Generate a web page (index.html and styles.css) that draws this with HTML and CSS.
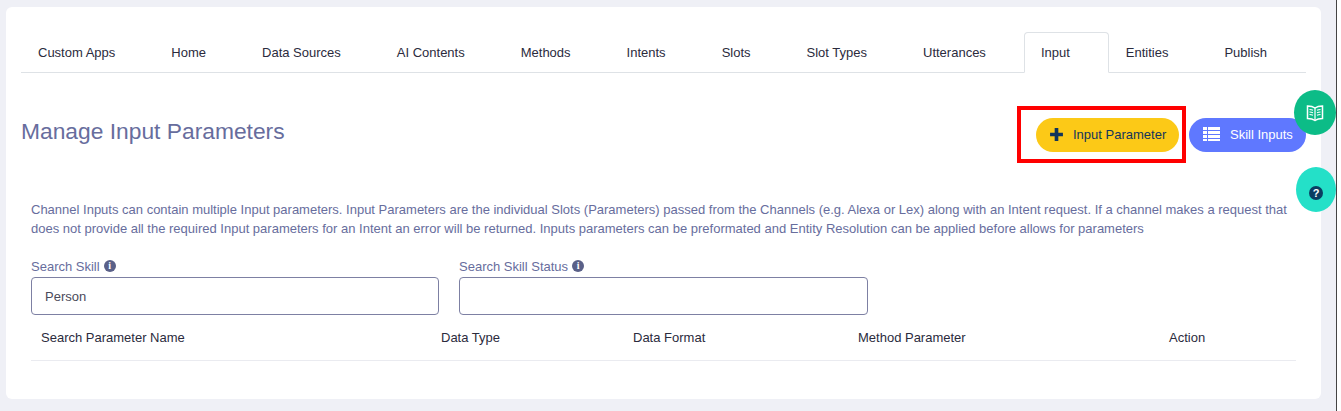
FILE: index.html
```html
<!DOCTYPE html>
<html lang="en">
<head>
    <meta charset="UTF-8">
    <title>Manage Input Parameters</title>
    <link rel="stylesheet" href="styles.css">
</head>
<body>
    <div class="page">
        <div class="card">
            <nav class="tabs">
                <a class="tab">Custom Apps</a>
                <a class="tab">Home</a>
                <a class="tab">Data Sources</a>
                <a class="tab">AI Contents</a>
                <a class="tab">Methods</a>
                <a class="tab">Intents</a>
                <a class="tab">Slots</a>
                <a class="tab">Slot Types</a>
                <a class="tab">Utterances</a>
                <a class="tab tab-active">Input</a>
                <a class="tab">Entities</a>
                <a class="tab">Publish</a>
            </nav>

            <div class="header">
                <h1 class="title">Manage Input Parameters</h1>
                <div class="actions">
                    <button class="btn btn-yellow">
                        <svg class="btn-icon" viewBox="0 0 14 14"><path d="M5.3 1h3.4v4.3H13v3.4H8.7V13H5.3V8.7H1V5.3h4.3z" fill="#12355b"/></svg>
                        Input Parameter
                        <span class="highlight"></span>
                    </button>
                    <button class="btn btn-blue">
                        <svg class="btn-icon btn-icon-list" viewBox="0 0 17 14"><path d="M0 0h4v3H0zM5 0h12v3H5zM0 4h4v3H0zM5 4h12v3H5zM0 8h4v3H0zM5 8h12v3H5zM0 12h4v2H0zM5 12h12v2H5z" fill="#fff"/></svg>
                        Skill Inputs
                    </button>
                </div>
            </div>

            <p class="intro">Channel Inputs can contain multiple Input parameters. Input Parameters are the individual Slots (Parameters) passed from the Channels (e.g. Alexa or Lex) along with an Intent request. If a channel makes a request that does not provide all the required Input parameters for an Intent an error will be returned. Inputs parameters can be preformated and Entity Resolution can be applied before allows for parameters</p>

            <div class="filters">
                <div class="field">
                    <label class="field-label">Search Skill <span class="info">i</span></label>
                    <input class="field-input" type="text" value="Person">
                </div>
                <div class="field">
                    <label class="field-label">Search Skill Status <span class="info">i</span></label>
                    <input class="field-input" type="text">
                </div>
            </div>

            <div class="table-head">
                <div>Search Parameter Name</div>
                <div>Data Type</div>
                <div>Data Format</div>
                <div>Method Parameter</div>
                <div>Action</div>
            </div>
        </div>

        <a class="float float-green">
            <svg width="18" height="18" viewBox="0 0 18 18" fill="none" stroke="#fff">
                <path d="M9 4C7 2.500 4 2 1.500 2v12.500c2.500 0 5.500.5 7.500 2 2-1.500 5-2 7.500-2V2C14 2 11 2.500 9 4z" stroke-width="1.500"/>
                <path d="M9 4v12.500M3.500 5.500c1.200 0 2.500.3 3.500.8M3.500 8c1.200 0 2.500.3 3.500.8M3.500 10.500c1.200 0 2.500.3 3.500.8M14.500 5.500c-1.200 0-2.500.3-3.500.8M14.500 8c-1.200 0-2.500.3-3.500.8M14.500 10.500c-1.200 0-2.500.3-3.500.8" stroke-width="1.200"/>
            </svg>
        </a>
        <a class="float float-teal"><span class="help">?</span></a>
    </div>
</body>
</html>
```

FILE: styles.css
```css
* {
    margin: 0;
    padding: 0;
    box-sizing: border-box;
}

body {
    font-family: "Liberation Sans", Arial, sans-serif;
    background: #fff;
    overflow: hidden;
}

.page {
    position: relative;
    width: 1337px;
    height: 411px;
    padding: 7px 15px 0 6px;
    background: #eff0f6;
    border-right: 1px solid #444;
}

.card {
    height: 392px;
    padding: 25px 15px 0;
    background: #fff;
    border-radius: 6px;
}

.tabs {
    display: flex;
    height: 41px;
    border-bottom: 1px solid #dee2e6;
}

.tab {
    height: 41px;
    padding: 11px 39px 0 17px;
    font-size: 13px;
    line-height: 18px;
    color: #2b2b3d;
    white-space: nowrap;
    border: 1px solid transparent;
    border-left-width: 0;
    border-right-width: 0;
}

.tab-active {
    margin-left: -1px;
    background: #fff;
    border: 1px solid #dee2e6;
    border-bottom-color: #fff;
    border-radius: 4px 4px 0 0;
    padding: 11px 38px 0 16px;
}

.header {
    display: flex;
    justify-content: space-between;
    align-items: flex-start;
    margin-top: 45px;
}

.title {
    font-size: 22.800px;
    font-weight: 400;
    line-height: 28px;
    color: #676d9d;
    margin-top: -1px;
}

.actions {
    display: flex;
    gap: 10px;
}

.btn {
    position: relative;
    display: flex;
    align-items: center;
    height: 34px;
    padding-bottom: 2px;
    border: none;
    border-radius: 17px;
    font-family: inherit;
    font-size: 13px;
}

.btn-yellow {
    width: 143px;
    padding-left: 13px;
    background: #fcc917;
    color: #12355b;
}

.btn-blue {
    width: 117px;
    padding-left: 14px;
    background: #5f78ff;
    color: #fff;
}

.btn-icon {
    width: 15px;
    height: 15px;
    margin-right: 9px;
}

.btn-icon-list {
    width: 17px;
    height: 14px;
    margin-right: 10px;
}

.highlight {
    position: absolute;
    top: -12px;
    left: -19px;
    width: 169px;
    height: 57px;
    border: 4px solid #f00;
}

.intro {
    margin: 48px 10px 0;
    font-size: 13px;
    line-height: 19px;
    color: #676d9d;
}

.filters {
    display: flex;
    gap: 20px;
    margin: 19px 0 0 10px;
}

.field {
    display: flex;
    flex-direction: column;
}

.field:first-child {
    width: 408px;
}

.field:last-child {
    width: 409px;
}

.field-label {
    display: flex;
    align-items: center;
    gap: 4px;
    height: 20px;
    padding-bottom: 2px;
    font-size: 13px;
    color: #676d9d;
}

.info {
    width: 12px;
    height: 12px;
    border-radius: 50%;
    background: #5a6088;
    color: #fff;
    font: bold 10px/12px "Liberation Serif", serif;
    text-align: center;
}

.field-input {
    height: 38px;
    padding: 0 13px;
    border: 1px solid #7d80a3;
    border-radius: 4px;
    font-family: inherit;
    font-size: 13px;
    color: #4a4a5a;
    outline: none;
}

.table-head {
    display: grid;
    grid-template-columns: 400px 192px 225px 311px 137px;
    margin: 0 10px;
    height: 46px;
    align-items: center;
    font-size: 13px;
    color: #2b2b3d;
    border-bottom: 1px solid #eaebf0;
}

.table-head div {
    padding-left: 10px;
}

.float {
    position: absolute;
    display: flex;
    align-items: center;
    justify-content: center;
    right: 0;
    border-radius: 50%;
}

.float-green {
    top: 90px;
    width: 42px;
    height: 45px;
    background: #0cbc87;
}

.float-teal {
    top: 167px;
    width: 40px;
    height: 45px;
    padding-top: 6px;
    background: #24e0c8;
}

.help {
    width: 14px;
    height: 14px;
    border-radius: 50%;
    background: #0a3d62;
    color: #fff;
    font: bold 11px/14px "Liberation Sans", sans-serif;
    text-align: center;
}
```
